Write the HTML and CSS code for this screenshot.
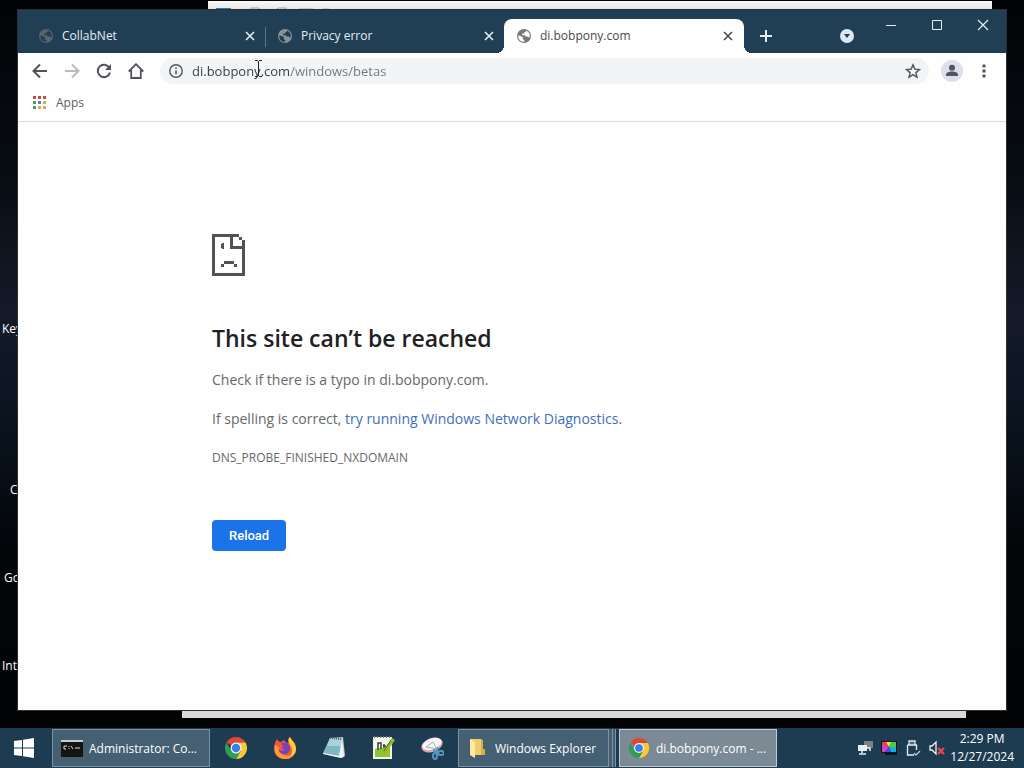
FILE: index.html
```html
<!DOCTYPE html>
<html lang="en">
<head>
<meta charset="utf-8">
<title>di.bobpony.com</title>
<link rel="stylesheet" href="styles.css">
</head>
<body>
<svg class="defs" aria-hidden="true">
  <symbol id="globe" viewBox="0 0 16 16">
    <circle cx="8" cy="8" r="7" fill="currentColor"/>
    <path class="globe-land" d="M2.4 7.2 6.8 9.1v1.8l1.5 1.4v1.5C4.9 14.300 1.600 11 2.400 7.200ZM9.900 2.500c3.100 1 4.600 4.200 3.500 7.300l-1.800-1.300H9.400V7.200H6.200V5.500h2.200V3.900h1.500Z"/>
  </symbol>
  <symbol id="cross" viewBox="0 0 10 10"><path d="m1 1 8 8M9 1 1 9" fill="none" stroke="currentColor" stroke-width="1.600"/></symbol>
  <symbol id="chrome" viewBox="0 0 24 24">
    <path d="M12 12 2.470 6.500A11 11 0 0 1 21.530 6.500H12Z" fill="#df4638"/>
    <path d="M12 12V6.500h9.530A11 11 0 0 1 12 23l4.760-8.250Z" fill="#fcc934"/>
    <path d="m12 12 4.760 2.750L12 23A11 11 0 0 1 2.470 6.500l4.770 8.250Z" fill="#2f9e4f"/>
    <circle cx="12" cy="12" r="5.500" fill="#eef4fb"/>
    <circle cx="12" cy="12" r="4.200" fill="#3b7ee8"/>
  </symbol>
</svg>

<main class="desktop">
  <span class="shortcut shortcut-key">Key</span>
  <span class="shortcut shortcut-c">C</span>
  <span class="shortcut shortcut-go">Go</span>
  <span class="shortcut shortcut-int">Int</span>
  <div class="back-window back-upper">
    <svg viewBox="0 0 160 4" width="160" height="4" aria-hidden="true"><path d="M8 1h15v3H8Z" fill="#3577a8"/><path d="M43 4V1h8l2 3M67 4l3-3h8v3M91 2h14M113 4l2-2h6" fill="none" stroke="#9aa8b4" stroke-width="1"/></svg>
  </div>
  <div class="back-window back-lower"></div>

  <section class="browser" aria-label="Browser window">
    <header class="tabstrip">
      <div class="tabs">
        <div class="tab tab-dim"><svg class="favicon"><use href="#globe"/></svg><span class="tab-title">CollabNet</span><button class="tab-close" aria-label="Close CollabNet"><svg><use href="#cross"/></svg></button></div>
        <div class="tab tab-divided"><svg class="favicon"><use href="#globe"/></svg><span class="tab-title">Privacy error</span><button class="tab-close" aria-label="Close Privacy error"><svg><use href="#cross"/></svg></button></div>
        <div class="tab tab-active"><svg class="favicon"><use href="#globe"/></svg><span class="tab-title">di.bobpony.com</span><button class="tab-close" aria-label="Close di.bobpony.com"><svg><use href="#cross"/></svg></button></div>
        <button class="new-tab" aria-label="New tab"><svg width="14" height="14" viewBox="0 0 14 14"><path d="M7 1v12M1 7h12" stroke="currentColor" stroke-width="2"/></svg></button>
      </div>
      <button class="tab-search" aria-label="Search tabs"><svg width="16" height="16" viewBox="0 0 16 16"><circle cx="8" cy="8" r="7" fill="#dce7ef"/><path d="M5 6h6L8 10Z" fill="#203c50"/></svg></button>
      <div class="captions">
        <button aria-label="Minimize"><svg viewBox="0 0 12 12"><path d="M1 6.500h10" stroke="currentColor"/></svg></button>
        <button aria-label="Maximize"><svg viewBox="0 0 12 12"><path d="M1.500 1.500h9v9h-9Z" fill="none" stroke="currentColor"/></svg></button>
        <button aria-label="Close window"><svg viewBox="0 0 12 12"><path d="m1 1 10 10M11 1 1 11" stroke="currentColor" stroke-width="1.200"/></svg></button>
      </div>
    </header>

    <nav class="toolbar" aria-label="Navigation">
      <button class="tool" aria-label="Back"><svg viewBox="0 0 16 16"><path d="M15 8H2M8 1.500 1.500 8 8 14.500" fill="none" stroke="currentColor" stroke-width="2"/></svg></button>
      <button class="tool tool-off" aria-label="Forward"><svg viewBox="0 0 16 16"><path d="M1 8h13M8 1.500 14.500 8 8 14.500" fill="none" stroke="currentColor" stroke-width="2"/></svg></button>
      <button class="tool" aria-label="Reload page"><svg viewBox="0 0 16 16"><path d="M13.200 4.500A6.200 6.200 0 1 0 14 9.500" fill="none" stroke="currentColor" stroke-width="2"/><path d="M15 1v6H9Z" fill="currentColor"/></svg></button>
      <button class="tool" aria-label="Home"><svg viewBox="0 0 16 16"><path d="M.700 8.500 8 1.200l7.300 7.300M3.200 7v8h9.600V7" fill="none" stroke="currentColor" stroke-width="1.800"/></svg></button>
      <div class="omnibox">
        <svg class="info" viewBox="0 0 14 14" aria-hidden="true"><circle cx="7" cy="7" r="6.200" fill="none" stroke="currentColor" stroke-width="1.400"/><path d="M7 6.200v4M7 3.500v1.500" stroke="currentColor" stroke-width="1.500"/></svg>
        <input class="address" type="text" aria-label="Address" value="di.bobpony.com/windows/betas">
        <button class="star" aria-label="Bookmark this page"><svg viewBox="0 0 16 16"><path d="m8 1.800 1.800 4.300 4.700.400-3.600 3.100 1.100 4.600L8 11.700l-4 2.500 1.100-4.600-3.600-3.100 4.700-.400Z" fill="none" stroke="currentColor" stroke-width="1.400"/></svg></button>
      </div>
      <button class="profile" aria-label="Profile"><svg viewBox="0 0 22 22"><circle cx="11" cy="11" r="11" fill="#dddfea"/><circle cx="11" cy="7.700" r="3" fill="#505563"/><path d="M5 16v-1.500c0-4 12-4 12 0V16Z" fill="#505563"/></svg></button>
      <button class="more" aria-label="Menu"><svg viewBox="0 0 4 14" width="4" height="14"><path d="M.500.500h3v3h-3Zm0 5h3v3h-3Zm0 5h3v3h-3Z" fill="currentColor"/></svg></button>
    </nav>

    <div class="bookmarks">
      <a class="apps" href="#"><svg viewBox="0 0 14 14" width="14" height="14" aria-hidden="true"><path d="M0 0h3v3H0ZM5 0h3v3H5ZM10 0h3v3h-3Z" fill="#c94746"/><path d="M0 5h3v3H0Z" fill="#4a9b60"/><path d="M5 5h3v3H5Z" fill="#4285d0"/><path d="M10 5h3v3h-3Z" fill="#cfae4b"/><path d="M0 10h3v3H0Z" fill="#4a9b60"/><path d="M5 10h3v3H5ZM10 10h3v3h-3Z" fill="#d9ad45"/></svg>Apps</a>
    </div>

    <article class="page">
      <div class="error">
        <svg class="sad-page" viewBox="0 0 33 42" aria-hidden="true" shape-rendering="crispEdges"><path d="M0 0h27v3h3v3h3v36H0ZM3 3v36h27V15H18V3Zm18 0v9h9V6h-3V3Z" fill-rule="evenodd"/><path d="M9 10h1V9h2v6h-2v-1H9ZM12 27h10v3h3v3h-3v-3H12v3H9v-3h3Z"/></svg>
        <h1>This site can’t be reached</h1>
        <p>Check if there is a typo in di.bobpony.com.</p>
        <p>If spelling is correct, <a href="#">try running Windows Network Diagnostics</a>.</p>
        <p class="code">DNS_PROBE_FINISHED_NXDOMAIN</p>
        <button class="reload">Reload</button>
      </div>
    </article>
  </section>
  <svg class="pointer" viewBox="0 0 9 19" aria-hidden="true"><path d="M1 1.500h2.500l1 1 1-1H8M4.500 2v15M1 17.500h2.500l1-1 1 1H8" fill="none" stroke="#242424"/></svg>
</main>

<footer class="taskbar">
  <button class="start" aria-label="Start"><svg viewBox="0 0 20 20" width="20" height="20"><path d="M0 3 8 2v7.500H0ZM9 1.800 20 0v9.500H9ZM0 10.500h8V18l-8-1ZM9 10.500h11V20L9 18.200Z" fill="#fff"/></svg></button>
  <button class="task"><svg viewBox="0 0 22 22"><path d="M0 3h22v17H0Z" fill="#151314"/><path d="M0 3h22v2H0Z" fill="#c9ced2"/><path d="M6 9H3v3h2M8 9v1m0 1v1m2-3 2 3m2-1h5" fill="none" stroke="#d9d9d9"/></svg><span>Administrator: Co...</span></button>
  <div class="pins">
    <button aria-label="Chrome"><svg><use href="#chrome"/></svg></button>
    <button aria-label="Firefox"><svg viewBox="0 0 24 24"><path d="M4 3c1 2 2 3 4 3l3-2c1 2 3 3 5 3-1-3-1-5 1-6 2 4 6 6 6 12 0 6-5 10-11 10S1 19 1 13c0-4 1-7 3-10Z" fill="#f6553c"/><path d="M17 1c2 4 6 6 6 12 0 5-4 9-9 10 3-3 5-5 5-9 0-3-2-5-3-7s-1-4 1-6Z" fill="#ffca35"/><path d="M2 9c-2 8 3 14 10 14 4 0 7-2 9-5-9 4-16 0-15-7Z" fill="#ff9c2b"/><path d="M8 8c2-2 6-2 8 1 3 5-1 10-6 9-3-1-5-3-4-5 2 2 5 2 6 0H9l1-3Z" fill="#7542bd"/></svg></button>
    <button aria-label="Notepad"><svg viewBox="0 0 24 24"><path d="m8 2 13-1 2 19-3 2-18-4Z" fill="#bccdd0"/><path d="m8 2 12 1-3 17L1 17Z" fill="#7fb8c4"/><path d="m8 2 12 1-1 7L5 10Z" fill="#a9d3da"/><path d="m1 17 16 3 3-17 2 17-3 2-18-4Z" fill="#eff5f5"/><path d="m8 2 12 1" stroke="#53666c" stroke-dasharray="1 1" stroke-width="2"/></svg></button>
    <button aria-label="Notepad++"><svg viewBox="0 0 24 24"><path d="M2 1h19v22H2Z" fill="#f3f7ec"/><path d="M4 13c5-2 10 0 15-2v10H4Z" fill="#8dc72d"/><path d="M3 1h17" stroke="#6c7966" stroke-dasharray="1 2" stroke-width="2"/><path d="M7 14V7h3v6M13 8v4M12 10h3M17 8v4M16 10h3" fill="none" stroke="#34412e" stroke-width="1.500"/><path d="m21 2 3 2-9 13-4 2 1-4Z" fill="#9bb82b"/><path d="m20 4-7 11" stroke="#4c701d"/></svg></button>
    <button aria-label="Snipping Tool"><svg viewBox="0 0 24 24"><ellipse cx="12" cy="9" rx="11" ry="7" fill="#e1a7b1" transform="rotate(-20 12 9)"/><ellipse cx="12" cy="8" rx="10" ry="5.500" fill="#f6f5f7" transform="rotate(-20 12 8)"/><path d="m6 11 7-5 4 7M6 11l12 2" fill="none" stroke="#a3adac" stroke-width="1"/><g fill="none" stroke="#559ac1" stroke-width="2"><ellipse cx="15" cy="20" rx="2" ry="3"/><ellipse cx="21" cy="17" rx="3" ry="2"/><path d="m16 17 2-6M18 16l-5-2"/></g></svg></button>
  </div>
  <button class="task task-stack"><svg viewBox="0 0 22 22"><path d="M3 2h11l2 2v14H5l-2-2Z" fill="#efcc68"/><path d="m3 2 5 3v16l-5-3Z" fill="#ffeaa0"/><path d="M14 3h2v9h2v6h-4Z" fill="#d7ae48"/></svg><span>Windows Explorer</span></button>
  <button class="task task-current"><svg><use href="#chrome"/></svg><span>di.bobpony.com - ...</span></button>
  <div class="tray">
    <svg viewBox="0 0 16 16" aria-label="Network" role="img"><path d="M7 1h9v7H7Z" fill="#78828a"/><path d="M1 5h9v6H1Z" fill="#e7eef2"/><path d="M5 11v2M2 14h7M10 8h3v3" fill="none" stroke="#e7eef2" stroke-width="1.500"/></svg>
    <svg viewBox="0 0 16 16" aria-label="Display" role="img"><path d="M0 1h16v14H4v-2H0Z" fill="#10151a"/><path d="M1 2h7v5L1 5Z" fill="#ef3b45"/><path d="m5 2 3 5 3-5Z" fill="#f4df25"/><path d="M10 2h5v5H8Z" fill="#46ce4a"/><path d="M1 4 8 7 4 12H1Z" fill="#d142c8"/><path d="m8 7-4 5h6Z" fill="#4b4ce7"/><path d="M8 7h7v5h-5Z" fill="#18afe0"/></svg>
    <svg viewBox="0 0 16 16" aria-label="USB device" role="img"><path d="M4 5V1h6v4M2.500 5h9v5M2.500 5v10H9" fill="none" stroke="#e7eef2" stroke-width="1.300"/><path d="M6 2.500v1M8 2.500v1M9 13l2 2 4-4" fill="none" stroke="#b9c6ce" stroke-width="1.300"/></svg>
    <svg viewBox="0 0 16 16" aria-label="Sound muted" role="img"><path d="M1 6h2l4-4v12l-4-4H1Z" fill="none" stroke="#edf2f5" stroke-width="1.300"/><path d="m9 8 6 6M15 8l-6 6" stroke="#e94554" stroke-width="2.400"/></svg>
    <time class="clock" datetime="2024-12-27T14:29"><span>2:29 PM</span><span>12/27/2024</span></time>
  </div>
</footer>
</body>
</html>
```

FILE: styles.css
```css
* { box-sizing: border-box; }

body {
  margin: 0;
  height: 100vh;
  display: flex;
  flex-direction: column;
  overflow: hidden;
  background: #020407;
  font-family: "Open Sans", "Noto Sans", sans-serif;
  font-size: 12px;
}

button {
  display: flex;
  align-items: center;
  justify-content: center;
  padding: 0;
  border: 0;
  background: none;
  color: inherit;
  font: inherit;
}

.defs { position: absolute; width: 0; height: 0; }

.desktop {
  position: relative;
  flex: 1;
  min-height: 0;
  background: linear-gradient(#020306, #080d14 25%, #151a29 43%, #0b1622 55%, #030609 75%, #010203);
}

.shortcut { position: absolute; line-height: 16px; color: #fff; }
.shortcut-key { left: 2px; top: 321px; }
.shortcut-c { left: 10px; top: 482px; }
.shortcut-go { left: 4px; top: 570px; }
.shortcut-int { left: 2px; top: 658px; }

.back-window { position: absolute; }
.back-upper { inset: 1px 32px auto 208px; height: 20px; background: linear-gradient(#fafafa, #e0e0e0 50%); }
.back-upper svg { display: block; margin-top: 6px; }
.back-lower { inset: auto 58px 10px 182px; height: 20px; background: #d8d8d8; }

.browser {
  position: absolute;
  inset: 10px 18px 18px;
  display: flex;
  flex-direction: column;
  background: #fefefe;
  box-shadow: 0 0 0 1px #2b3032;
}

.tabstrip { display: flex; height: 43px; background: #213f54; color: #e3edf4; }
.tabs { flex: 1; display: flex; align-items: flex-end; padding-left: 8px; min-width: 0; }

.tab {
  flex: 0 1 239px;
  height: 34px;
  display: flex;
  align-items: center;
  gap: 8px;
  padding: 0 7px 0 12px;
  min-width: 0;
}

.favicon { width: 16px; height: 16px; flex: none; color: #8b9295; }
.tab .favicon { --land: #213f54; }
.globe-land { fill: var(--land); }
.tab-dim .favicon { color: #59646b; }
.tab-title { flex: 1; padding-bottom: 2px; white-space: nowrap; overflow: hidden; }
.tab-close { width: 16px; height: 16px; }
.tab-close svg { width: 10px; height: 10px; }
.tab-divided { background: linear-gradient(#607687, #607687) left 8px / 1px 20px no-repeat; }

.tab-active {
  position: relative;
  flex-basis: 240px;
  padding-right: 8px;
  border-radius: 8px 8px 0 0;
  background: #fefefe;
  color: #45494c;
}
.tab-active .favicon { --land: #fefefe; color: #75797b; }
.tab-active::before,
.tab-active::after { content: ""; position: absolute; bottom: 0; width: 8px; height: 8px; }
.tab-active::before { right: 100%; background: radial-gradient(circle at 0 0, transparent 8px, #fefefe 8px); }
.tab-active::after { left: 100%; background: radial-gradient(circle at 100% 0, transparent 8px, #fefefe 8px); }

.new-tab { width: 28px; height: 34px; margin-left: 8px; }
.tab-search { width: 28px; height: 34px; align-self: flex-end; margin-right: 7px; }
.captions { display: flex; }
.captions button { width: 46px; height: 30px; }
.captions svg { width: 12px; height: 12px; }

.toolbar {
  display: flex;
  align-items: center;
  height: 36px;
  padding: 0 12px 0 6px;
  color: #505458;
}
.tool { width: 32px; height: 32px; }
.tool svg { width: 16px; height: 16px; }
.tool-off { color: #b9bbbd; }

.omnibox {
  flex: 1;
  display: flex;
  align-items: center;
  gap: 8px;
  height: 26px;
  margin-left: 8px;
  padding: 0 8px;
  border-radius: 13px;
  background: #f2f4f5;
}
.info { width: 16px; height: 16px; padding: 1px; flex: none; }
.address {
  flex: 1;
  min-width: 0;
  padding: 0;
  border: 0;
  outline: 0;
  font: 13px/20px "Open Sans", "Noto Sans", sans-serif;
  color: transparent;
  background: linear-gradient(90deg, #383c3f 99px, #737679 99px);
  -webkit-background-clip: text;
  background-clip: text;
}
.star { width: 16px; height: 20px; }
.star svg { width: 16px; height: 16px; }
.profile { width: 22px; height: 22px; margin-left: 12px; }
.profile svg { width: 22px; height: 22px; }
.more { width: 20px; height: 32px; margin-left: 11px; }

.bookmarks { display: flex; height: 33px; padding: 0 15px; border-bottom: 1px solid #dadcde; }
.apps { display: flex; align-items: center; gap: 9px; padding-bottom: 5px; color: #5a5e62; text-decoration: none; }

.page { flex: 1; min-height: 0; overflow: hidden; padding: 112px 24px 0; }
.error { max-width: 600px; margin: 0 auto; color: #66696d; font-size: 14px; line-height: 24px; }
.sad-page { display: block; width: 33px; height: 42px; fill: #505356; }
h1 { margin: 46px 0 14px; color: #202124; font-size: 23px; line-height: 32px; font-weight: 600; }
p { margin: 0 0 15px; }
.error a { color: #416fbd; text-decoration: none; }
.code { font-size: 12px; }
.reload {
  height: 31px;
  margin-top: 50px;
  padding: 0 17px;
  border-radius: 4px;
  background: #1a73e8;
  color: #fff;
  font: 500 13px/20px Roboto, sans-serif;
}

.pointer { position: absolute; left: 254px; top: 59px; width: 9px; height: 19px; }

.taskbar { display: flex; height: 40px; background: #1e3c51; color: #fff; }
.start { width: 48px; margin-right: 4px; }
.task {
  flex: 0 1 158px;
  justify-content: flex-start;
  gap: 6px;
  height: 38px;
  margin-top: 1px;
  padding: 0 8px;
  border: 1px solid #7b91a0;
  background: #466073;
  white-space: nowrap;
}
.task svg { width: 22px; height: 22px; flex: none; }
.task span { overflow: hidden; }
.task-stack {
  flex-basis: 151px;
  margin-right: 10px;
  box-shadow: 3px 0 #466073, 4px 0 #7b91a0, 6px 0 #466073, 7px 0 #7b91a0;
}
.task-current { border-color: #c1cbd1; background: #7b8a95; }
.pins { display: flex; padding: 0 2px 0 1px; }
.pins button { width: 49px; }
.pins svg { width: 24px; height: 24px; }
.tray { display: flex; align-items: center; gap: 8px; margin-left: auto; padding-right: 10px; }
.tray svg { width: 16px; height: 16px; }
.clock { display: flex; flex-direction: column; align-items: center; margin-left: -3px; line-height: 18px; }
```
